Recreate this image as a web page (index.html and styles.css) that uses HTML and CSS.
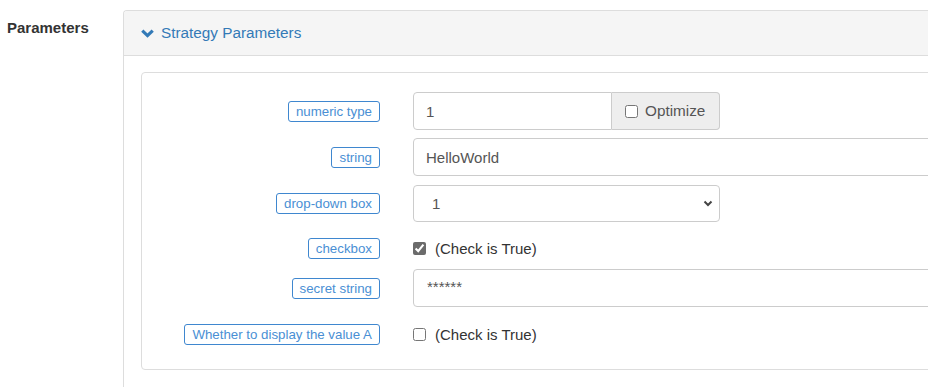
FILE: index.html
```html
<!DOCTYPE html>
<html>
<head>
<meta charset="utf-8">
<link rel="stylesheet" href="styles.css">
</head>
<body>
<div class="page">
  <div class="side-label">Parameters</div>
  <div class="panel">
    <div class="panel-head">
      <svg class="chev" width="13" height="9" viewBox="0 0 13 9"><polyline points="1.3,1.6 6.5,6.6 11.7,1.6" fill="none" stroke="#337ab7" stroke-width="3.2"/></svg>
      <span class="panel-title">Strategy Parameters</span>
    </div>
    <div class="panel-body">
      <div class="box">
        <div class="row r1">
          <div class="label-col"><span class="tag">numeric type</span></div>
          <div class="field">
            <div class="group">
              <input class="ctl num" type="text" value="1">
              <label class="addon"><input type="checkbox" class="cb"> Optimize</label>
            </div>
          </div>
        </div>
        <div class="row r2">
          <div class="label-col"><span class="tag">string</span></div>
          <div class="field"><input class="ctl wide" type="text" value="HelloWorld"></div>
        </div>
        <div class="row r3">
          <div class="label-col"><span class="tag">drop-down box</span></div>
          <div class="field">
            <div class="sel-wrap">
              <select class="ctl sel"><option>1</option><option>2</option></select>
              <svg class="sel-arrow" width="10" height="7" viewBox="0 0 10 7"><polyline points="1.5,1.5 5,5 8.5,1.5" fill="none" stroke="#444" stroke-width="2"/></svg>
            </div>
          </div>
        </div>
        <div class="row r4 check-row">
          <div class="label-col"><span class="tag">checkbox</span></div>
          <div class="field"><label class="check"><input type="checkbox" class="cb" checked> (Check is True)</label></div>
        </div>
        <div class="row r5">
          <div class="label-col"><span class="tag">secret string</span></div>
          <div class="field"><input class="ctl wide secret" type="text" value="******"></div>
        </div>
        <div class="row r6 check-row">
          <div class="label-col"><span class="tag">Whether to display the value A</span></div>
          <div class="field"><label class="check"><input type="checkbox" class="cb"> (Check is True)</label></div>
        </div>
      </div>
    </div>
  </div>
</div>
</body>
</html>
```

FILE: styles.css
```css
html, body {
  margin: 0;
  padding: 0;
  background: #fff;
  overflow: hidden;
}
body {
  font-family: "Liberation Sans", Arial, sans-serif;
  color: #333;
  width: 928px;
  height: 387px;
}
.page {
  display: flex;
  padding-top: 10px;
  height: 377px;
  overflow: hidden;
}
.side-label {
  width: 123px;
  flex-shrink: 0;
  box-sizing: border-box;
  padding-left: 7px;
  margin-top: 8px;
  font-size: 15px;
  line-height: 20px;
  font-weight: bold;
  color: #333;
}
.panel {
  width: 805px;
  flex-shrink: 0;
  border: 1px solid #ddd;
  border-right: none;
  border-bottom: none;
  border-radius: 4px 0 0 0;
  overflow: hidden;
}
.panel-head {
  height: 44px;
  background: #f5f5f5;
  border-bottom: 1px solid #ddd;
  display: flex;
  align-items: center;
  padding-left: 17px;
  gap: 7px;
}
.chev {
  display: block;
  margin-top: 1px;
}
.panel-title {
  font-size: 15.3px;
  color: #337ab7;
  line-height: 20px;
}
.panel-body {
  padding: 16px 0 0 17px;
}
.box {
  width: 900px;
  border: 1px solid #ddd;
  border-radius: 4px;
  padding: 19px 0 23px;
}
.row {
  display: flex;
  align-items: center;
  height: 38px;
}
.r2 { margin-top: 8px; }
.r3 { margin-top: 9px; height: 37px; }
.r4 { margin-top: 14px; }
.r5 { margin-top: 9px; }
.r6 { margin-top: 15px; }
.check-row { height: 24px; }
.label-col {
  width: 238px;
  flex-shrink: 0;
  text-align: right;
  margin-right: 33px;
}
.tag {
  display: inline-block;
  font-size: 13.3px;
  line-height: 15px;
  padding: 2px 7px;
  border: 1px solid #3f87cf;
  border-radius: 3px;
  color: #4a8fd4;
}
.field {
  flex: 1;
  display: flex;
  align-items: center;
  height: 100%;
}
.ctl {
  box-sizing: border-box;
  height: 100%;
  border: 1px solid #ccc;
  border-radius: 4px;
  padding: 0 12px;
  font-family: "Liberation Sans", Arial, sans-serif;
  font-size: 15px;
  color: #555;
  background: #fff;
  outline: none;
  margin: 0;
}
.group {
  display: flex;
  height: 100%;
  width: 307px;
}
.num {
  width: 199px;
  border-radius: 4px 0 0 4px;
}
.addon {
  flex: 1;
  box-sizing: border-box;
  display: flex;
  align-items: center;
  gap: 7px;
  padding-left: 13px;
  background: #eee;
  border: 1px solid #ccc;
  border-left: none;
  border-radius: 0 4px 4px 0;
  font-size: 15.3px;
  color: #555;
}
.wide {
  width: 560px;
}
.secret {
  padding-top: 0;
  padding-bottom: 4px;
  padding-left: 13px;
}
.sel-wrap {
  position: relative;
  width: 307px;
  height: 100%;
}
.sel {
  width: 100%;
  appearance: none;
  -webkit-appearance: none;
  padding-left: 18px;
}
.sel-arrow {
  position: absolute;
  right: 7px;
  top: 15px;
}
.cb {
  width: 13px;
  height: 13px;
  margin: 0;
  accent-color: #6b6b6b;
}
.check {
  display: flex;
  align-items: center;
  gap: 9px;
  font-size: 15px;
  color: #333;
}
```
